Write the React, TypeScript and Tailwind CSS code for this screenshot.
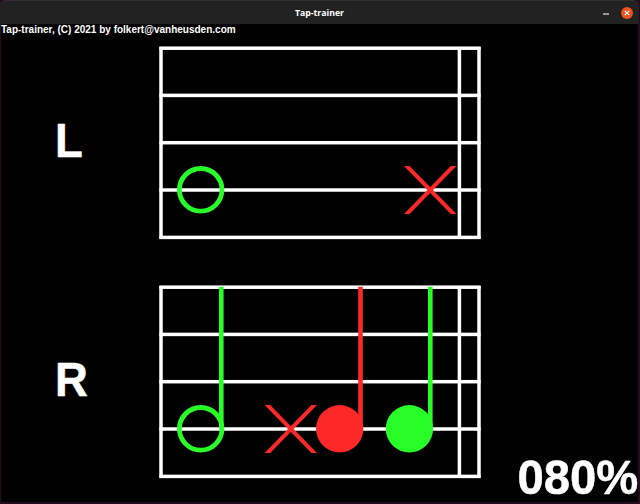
import type { ReactNode } from "react";

const GREEN = "#28ff28";
const RED = "#ff2828";

function Ring({ x }: { x: number }) {
  return <circle cx={x} cy={143.8} r={21.3} fill="none" stroke={GREEN} strokeWidth={4.8} />;
}

function Dot({ x, color }: { x: number; color: string }) {
  return <circle cx={x} cy={143.8} r={23.7} fill={color} />;
}

function Stem({ x, color }: { x: number; color: string }) {
  return <rect x={x} y={1.8} width={4.6} height={142} fill={color} />;
}

function Miss({ x }: { x: number }) {
  return (
    <g transform={`translate(${x} 144)`} fill={RED}>
      <path d="M-26.2 -24h5.6L26.2 24h-5.6z" />
      <path d="M26.2 -24h-5.6L-26.2 24h5.6z" />
    </g>
  );
}

function Staff({ label, children }: { label: string; children: ReactNode }) {
  return (
    <section className="flex h-[192px] items-start">
      <div className="w-[158px] shrink-0 pl-[53.5px] pt-[65px]">
        <span className="block origin-left scale-x-[0.93] text-[49px] leading-[58px] [-webkit-text-stroke:0.5px_white]">
          {label}
        </span>
      </div>
      <svg width="324" height="194" viewBox="0 0 324 194">
        <g fill="#fff">
          {[2.2, 49.4, 96.7, 144, 191.4].map((y) => (
            <rect key={y} x={0.4} y={y - 1.75} width={321.2} height={3.5} />
          ))}
          {[2, 300.4, 320].map((x) => (
            <rect key={x} x={x - 1.75} y={1} width={3.5} height={191.5} />
          ))}
        </g>
        {children}
      </svg>
    </section>
  );
}

export default function App() {
  return (
    <div className="flex h-[504px] w-[640px] flex-col overflow-hidden bg-[#220b1c] font-['Liberation_Sans',Arial,sans-serif] font-bold text-white">
      <header className="grid h-6 w-[639px] shrink-0 grid-cols-[1fr_auto_1fr] items-center rounded-t-md border-t border-[#303030] bg-[#222222]">
        <span />
        <h1 className="pt-px font-['Open_Sans','Noto_Sans',sans-serif] text-[8.7px] leading-4">Tap-trainer</h1>
        <div className="flex items-center justify-end gap-[12px] pr-[6px]">
          <span className="mt-[3px] h-[2px] w-[6px] bg-[#999]" />
          <svg width="12" height="12" viewBox="0 0 12 12">
            <circle cx="6" cy="6" r="6" fill="#e9541f" />
            <path d="M3.8 3.8l4.4 4.4M8.2 3.8l-4.4 4.4" stroke="#fff" strokeWidth="1.2" />
          </svg>
        </div>
      </header>
      <main className="ml-px flex h-[478px] w-[637px] flex-col bg-black">
        <p className="h-[22px] origin-left text-[10px] leading-[11px] whitespace-nowrap">
          Tap-trainer, (C) 2021 by folkert@vanheusden.com
        </p>
        <Staff label="L">
          <Ring x={41.7} />
          <Miss x={271.2} />
        </Staff>
        <div className="h-[47px] shrink-0" />
        <Staff label="R">
          <Ring x={41.7} />
          <Stem x={60} color={GREEN} />
          <Miss x={131.8} />
          <Dot x={180.7} color={RED} />
          <Stem x={199.2} color={RED} />
          <Dot x={250.4} color={GREEN} />
          <Stem x={269} color={GREEN} />
        </Staff>
        <div className="flex h-0 items-end justify-end">
          <span className="mb-[-29px] block h-[58px] origin-right scale-x-[0.965] text-[49px] leading-[58px] [-webkit-text-stroke:0.5px_white]">
            080%
          </span>
        </div>
      </main>
    </div>
  );
}
